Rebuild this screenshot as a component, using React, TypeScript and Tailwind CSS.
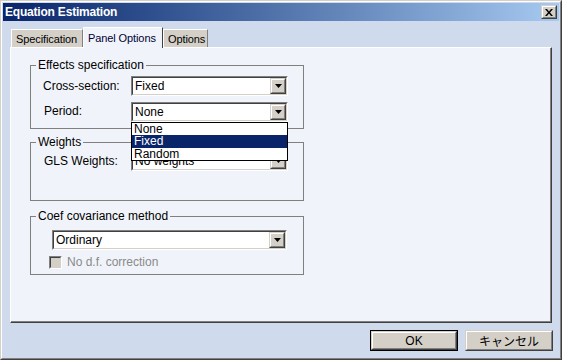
import React from 'react';

const font = { fontFamily: '"Liberation Sans", Arial, sans-serif' };

const Raised = ({ className = '', children }: { className?: string; children?: React.ReactNode }) => (
  <div className={`border border-t-[#d4d0c8] border-l-[#d4d0c8] border-r-[#404040] border-b-[#404040] ${className}`}>
    <div className="h-full w-full border border-t-white border-l-white border-r-[#808080] border-b-[#808080] bg-[#d4d0c8] flex items-center justify-center">
      {children}
    </div>
  </div>
);

const Sunken = ({ className = '', children }: { className?: string; children?: React.ReactNode }) => (
  <div className={`border border-t-[#808080] border-l-[#808080] border-r-white border-b-white ${className}`}>
    <div className="h-full w-full border border-t-[#404040] border-l-[#404040] border-r-[#d4d0c8] border-b-[#d4d0c8] bg-white flex items-center">
      {children}
    </div>
  </div>
);

const Arrow = () => (
  <svg width="7" height="4" viewBox="0 0 7 4">
    <path d="M0 0h7L3.5 4z" fill="#000" />
  </svg>
);

const Combo = ({ value, className = '' }: { value: string; className?: string }) => (
  <Sunken className={`h-[20px] ${className}`}>
    <span className="flex-1 pl-[2px] text-[12px] leading-[14px] text-black">{value}</span>
    <Raised className="w-[16px] h-[16px]">
      <Arrow />
    </Raised>
  </Sunken>
);

const Group = ({ title, className = '', children }: { title: string; className?: string; children?: React.ReactNode }) => (
  <fieldset className={`ml-[19px] w-[274px] border border-[#808080] ${className}`}>
    <legend className="ml-[5px] px-[2px] text-[12px] leading-[13px] text-black">{title}</legend>
    {children}
  </fieldset>
);

const Tab = ({ label, active, className = '' }: { label: string; active?: boolean; className?: string }) =>
  active ? (
    <div className={`relative z-10 -mb-[1px] h-[21px] border-t border-l border-t-white border-l-white border-r border-r-[#404040] bg-[#f0f4fa] pl-[4px] pt-[3px] text-[11px] leading-[14px] tracking-[-0.1px] text-[#000033] ${className}`}>
      {label}
    </div>
  ) : (
    <div className={`h-[18px] border-t border-l border-t-white border-l-white border-r border-r-[#808080] bg-[#d4d0c8] pl-[4px] pt-[2px] text-[11px] leading-[14px] tracking-[-0.1px] text-black ${className}`}>
      {label}
    </div>
  );

export default function App() {
  return (
    <div style={font} className="w-[562px] h-[360px] border border-t-[#d4d0c8] border-l-[#d4d0c8] border-r-[#404040] border-b-[#404040] select-none">
      <div className="h-full w-full border border-t-white border-l-white border-r-[#808080] border-b-[#808080] bg-[#cfdbec] flex flex-col p-[1px]">
        {/* title bar */}
        <div className="h-[18px] flex items-center justify-between bg-gradient-to-r from-[#0a246a] to-[#a6caf0] pl-[2px] pr-[2px]">
          <span className="text-[12px] font-bold text-white leading-[14px] tracking-[-0.2px]">Equation Estimation</span>
          <Raised className="w-[16px] h-[14px]">
            <svg width="8" height="7" viewBox="0 0 8 7">
              <path d="M0 0h2l2 2.5L6 0h2L5 3.5 8 7H6L4 4.5 2 7H0l3-3.5z" fill="#000" />
            </svg>
          </Raised>
        </div>

        {/* tabs */}
        <div className="mt-[6px] ml-[8px] flex items-end">
          <Tab label="Specification" className="w-[72px]" />
          <Tab label="Panel Options" active className="w-[80px]" />
          <Tab label="Options" className="w-[45px]" />
        </div>

        {/* panel */}
        <div className="ml-[7px] mr-[7px] h-[276px] border-t border-l border-t-white border-l-white border-r border-b border-r-[#404040] border-b-[#404040]">
          <div className="h-full w-full border-r border-b border-r-[#808080] border-b-[#808080] bg-[#f0f4fa] pt-[11px]">
            <Group title="Effects specification" className="h-[70px]">
              <div className="mt-[4px] flex items-center">
                <span className="w-[100px] pl-[12px] text-[12px] text-black">Cross-section:</span>
                <Combo value="Fixed" className="w-[157px]" />
              </div>
              <div className="mt-[6px] flex items-center">
                <span className="w-[100px] pl-[13px] -mt-[3px] text-[12px] text-black">Period:</span>
                <div className="relative w-[157px]">
                  <Combo value="None" className="w-[157px]" />
                  <div className="absolute left-0 top-[20px] z-20 w-[157px] border border-black bg-white text-[12px]">
                    <div className="h-[12px] leading-[12px] pl-[2px] text-black">None</div>
                    <div className="h-[13px] leading-[13px] pl-[2px] bg-[#0a246a] text-white">Fixed</div>
                    <div className="h-[12px] leading-[12px] pl-[2px] text-black">Random</div>
                  </div>
                </div>
              </div>
            </Group>

            <Group title="Weights" className="mt-[7px] h-[65px]">
              <div className="mt-[2px] flex items-center">
                <span className="w-[100px] pl-[13px] text-[12px] text-black">GLS Weights:</span>
                <Combo value="No weights" className="w-[157px]" />
              </div>
            </Group>

            <Group title="Coef covariance method" className="mt-[9px] h-[65px]">
              <Combo value="Ordinary" className="mt-[7px] ml-[21px] w-[235px]" />
              <div className="mt-[6px] ml-[18px] flex items-center gap-[5px]">
                <Sunken className="w-[13px] h-[13px]">
                  <div className="h-full w-full bg-[#d4d0c8]" />
                </Sunken>
                <span className="text-[12px] leading-[13px] text-[#8a8a8a]">No d.f. correction</span>
              </div>
            </Group>
          </div>
        </div>

        {/* buttons */}
        <div className="mt-[7px] mr-[6px] flex justify-end gap-[7px]">
          <div className="border border-black">
            <Raised className="w-[86px] h-[19px]">
              <span className="text-[12px] leading-[14px] text-black">OK</span>
            </Raised>
          </div>
          <Raised className="w-[88px] h-[21px]">
            <span className="text-[12px] leading-[14px] text-black" style={{ fontFamily: '"Noto Sans CJK JP", sans-serif' }}>キャンセル</span>
          </Raised>
        </div>
      </div>
    </div>
  );
}
